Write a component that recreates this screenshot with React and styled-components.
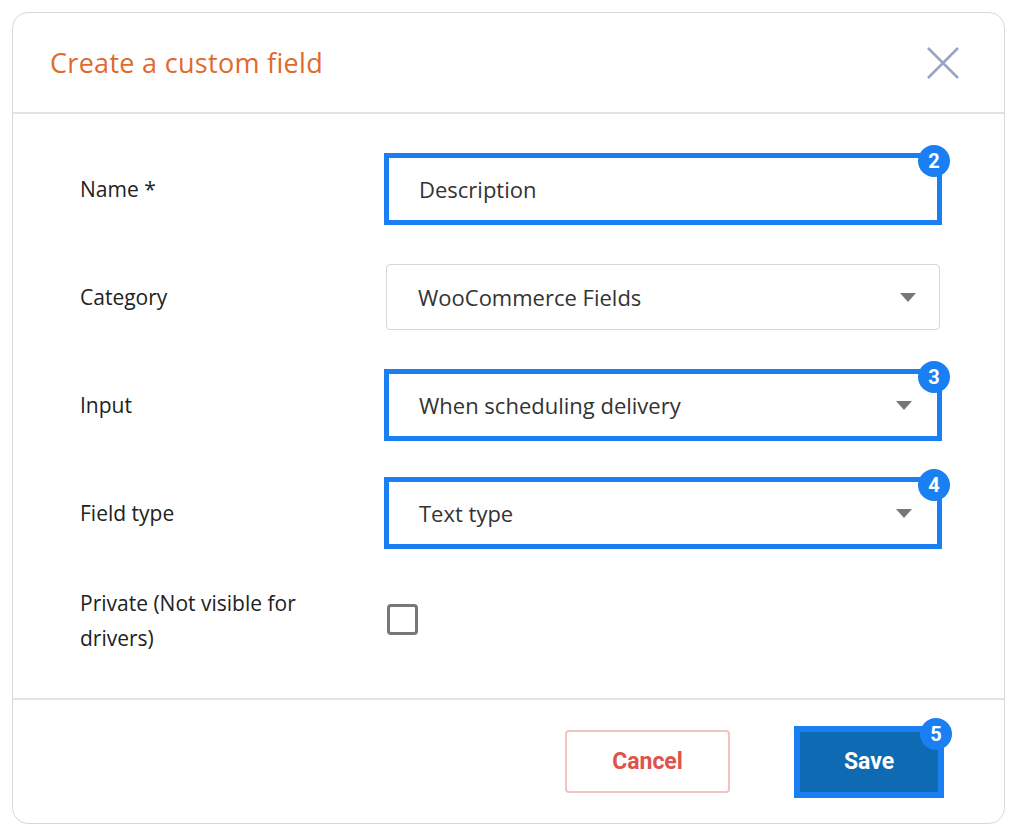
import React from 'react';
import styled, { createGlobalStyle } from 'styled-components';

const Global = createGlobalStyle`
  body { margin: 0; background: #fff; font-family: "Open Sans", "Liberation Sans", sans-serif; }
`;

const Card = styled.div`
  margin: 12px;
  width: 993px;
  height: 812px;
  box-sizing: border-box;
  border: 1px solid #d8d8d8;
  border-radius: 16px;
  display: flex;
  flex-direction: column;
`;

const Header = styled.div`
  height: 99px;
  border-bottom: 2px solid #e2e2e2;
  display: flex;
  align-items: center;
  justify-content: space-between;
  padding: 0 44px 0 37px;
`;

const Title = styled.h1`
  margin: 0;
  font-weight: 400;
  font-size: 27px;
  color: #e06a2c;
  letter-spacing: 0.3px;
`;

const Body = styled.div`
  padding: 21px 0 23px 67px;
  border-bottom: 2px solid #e2e2e2;
`;

const Row = styled.div`
  height: 108px;
  display: grid;
  grid-template-columns: 304px 558px;
  align-items: center;
`;

const Label = styled.div`
  font-size: 21px;
  line-height: 35px;
  color: #222;
  padding-right: 20px;
`;

const Field = styled.div`
  position: relative;
  box-sizing: border-box;
  height: ${p => (p.$hl ? 72 : 66)}px;
  margin: 0 ${p => (p.$hl ? 0 : 2)}px;
  border: ${p => (p.$hl ? '5px solid #1a7ff2' : '1px solid #d6d6d6')};
  border-radius: ${p => (p.$hl ? 0 : 4)}px;
  display: flex;
  align-items: center;
  justify-content: space-between;
  padding: 0 ${p => (p.$hl ? 25 : 23)}px 0 ${p => (p.$hl ? 30 : 31)}px;
  font-size: 22px;
  color: #333;
`;

const Caret = styled.span`
  width: 0;
  height: 0;
  border-left: 8px solid transparent;
  border-right: 8px solid transparent;
  border-top: 9px solid #777;
`;

const Badge = styled.span`
  position: absolute;
  top: -13px;
  right: -13px;
  width: 32px;
  height: 32px;
  border-radius: 50%;
  background: #1a7ff2;
  color: #fff;
  font-family: Roboto, sans-serif;
  font-weight: 700;
  font-size: 20px;
  display: flex;
  align-items: center;
  justify-content: center;
`;

const Check = styled.span`
  width: 31px;
  height: 31px;
  box-sizing: border-box;
  border: 3px solid #777;
  border-radius: 4px;
  margin-left: 3px;
  margin-top: -4px;
`;

const Footer = styled.div`
  flex: 1;
  display: flex;
  align-items: center;
  justify-content: flex-end;
  gap: 64px;
  padding-right: 60px;
`;

const Button = styled.button`
  position: relative;
  font-family: Roboto, "Liberation Sans", sans-serif;
  font-weight: 700;
  font-size: 23px;
  box-sizing: border-box;
  cursor: pointer;
  ${p => p.$primary ? `
    width: 150px; height: 72px;
    background: #0e6ab2; color: #fff;
    border: 6px solid #1a7ff2;
  ` : `
    width: 165px; height: 63px;
    background: #fff; color: #e0524a;
    border: 2px solid #f3c4bf; border-radius: 4px;
  `}
`;

const fields = [
  { label: 'Name *', value: 'Description', badge: 2 },
  { label: 'Category', value: 'WooCommerce Fields', select: true },
  { label: 'Input', value: 'When scheduling delivery', select: true, badge: 3 },
  { label: 'Field type', value: 'Text type', select: true, badge: 4 },
];

export default function App() {
  return (
    <>
      <Global />
      <Card>
        <Header>
          <Title>Create a custom field</Title>
          <svg width="34" height="34" viewBox="0 0 34 34">
            <path d="M2 2L32 32M32 2L2 32" stroke="#9aa3c2" strokeWidth="2.5" />
          </svg>
        </Header>
        <Body>
          {fields.map(f => (
            <Row key={f.label}>
              <Label>{f.label}</Label>
              <Field $hl={!!f.badge}>
                {f.value}
                {f.select && <Caret />}
                {f.badge && <Badge>{f.badge}</Badge>}
              </Field>
            </Row>
          ))}
          <Row>
            <Label>Private (Not visible for drivers)</Label>
            <Check />
          </Row>
        </Body>
        <Footer>
          <Button>Cancel</Button>
          <Button $primary>
            Save
            <Badge style={{ top: -14, right: -14 }}>5</Badge>
          </Button>
        </Footer>
      </Card>
    </>
  );
}
